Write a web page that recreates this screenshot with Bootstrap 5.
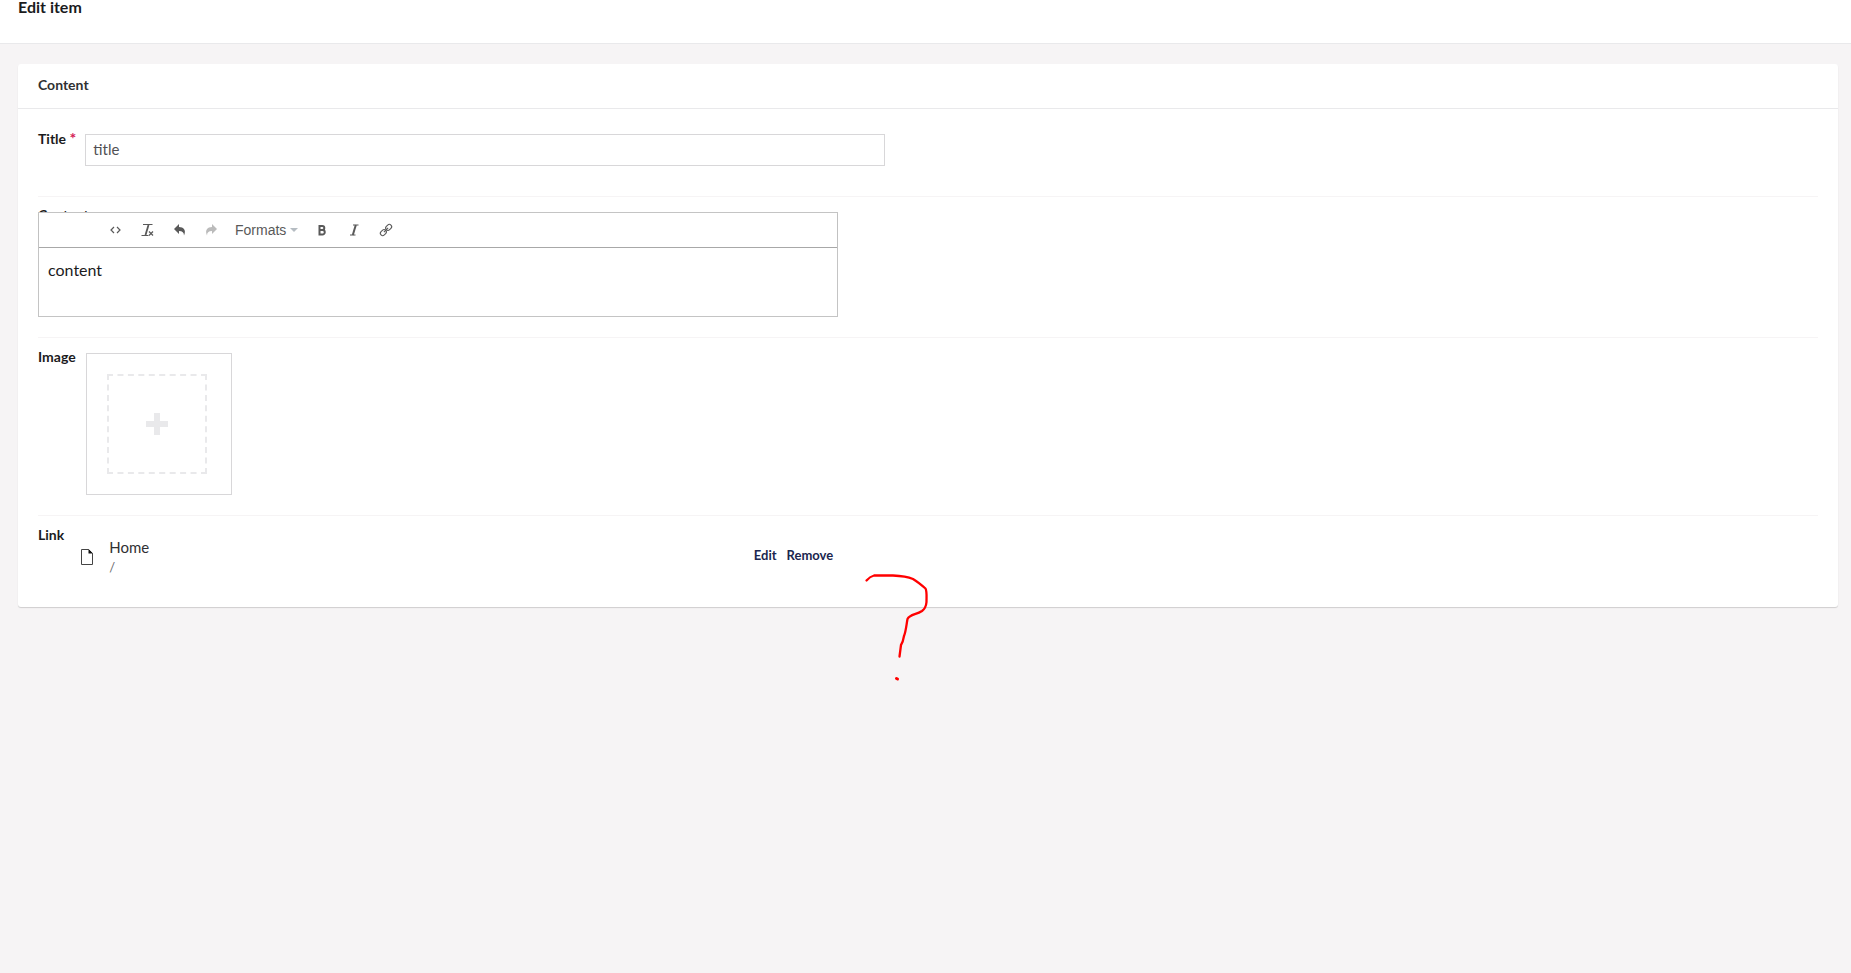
<!DOCTYPE html>
<html lang="en">
<head>
<meta charset="utf-8">
<meta name="viewport" content="width=device-width, initial-scale=1">
<title>Edit item</title>
<link href="https://cdn.jsdelivr.net/npm/bootstrap@5.3.0/dist/css/bootstrap.min.css" rel="stylesheet">
<style>
body { background: #f6f4f5; font-family: Lato, "Liberation Sans", sans-serif; font-size: 15px; line-height: 20px; color: #303033; }
.page-top { height: 44px; padding: 0 18px; border-bottom: 1px solid #e9e9eb; }
.page-top h1 { font-size: 16px; line-height: 14px; font-weight: 700; color: #1b1b1d; }
.page-main { padding: 20px 13px 20px 18px; }
.panel { border-radius: 3px; box-shadow: 0 1px 1px rgba(0,0,0,.16); }
.panel-head { height: 45px; padding: 0 20px 2px; border-bottom: 1px solid #e9e9eb; }
.panel-head h2 { font-size: 14px; line-height: 20px; font-weight: 700; }
.panel-content { padding: 10px 20px 0; }
.field { border-bottom: 1px solid #f6f4f5; padding: 15px 0; }
.field:last-child { border-bottom: 0; }
.field-name { font-size: 14px; line-height: 20px; font-weight: 700; margin-top: -6px; height: 20px; color: #1b1b1d; }
.required { font-size: 16px; color: #d42054; }
.field-short { min-height: 78px; gap: 9px; }
.title-input { width: 800px; height: 32px; padding: 0 7px 3px; border: 1px solid #d8d7d9; border-radius: 0; color: #515054; }
.field-editor { height: 141px; }
.under-editor { left: 0; top: 14px; }
.editor { width: 800px; height: 105px; border: 1px solid #c4c4c4; background: #fff; }
.editor-bar { height: 35px; padding-left: 60px; border-bottom: 1px solid #a8a8a8; box-shadow: 0 1px 1px rgba(0,0,0,.08); }
.tool { width: 32px; height: 28px; border: 0; background: none; padding: 0; color: #595959; }
.tool svg { display: block; margin: 0 auto; }
.tool:disabled { color: #bbb; }
.formats { width: 79px; height: 28px; border: 0; background: none; padding: 0 0 0 8px; font: 14px/20px "Liberation Sans", sans-serif; color: #595959; gap: 4px; }
.editor-text { padding: 12px 9px; font-size: 16px; line-height: 20px; color: #1b1b1d; resize: none; }
.field-image { height: 178px; gap: 10px; }
.media-box { width: 146px; height: 142px; padding: 20px; border: 1px solid #d8d7d9; }
.media-add { width: 100px; height: 100px; border: 2px dashed #e9e9eb; background: none; padding: 0; }
.field-link { min-height: 91px; gap: 16px; }
.link-row { width: 753px; padding-top: 6px; gap: 15px; }
.link-icon { margin-top: 11px; }
.link-url { font-size: 13px; color: #68676b; }
.link-actions { margin-top: 8px; gap: 10px; }
.link-action { font-size: 13px; font-weight: 700; color: #1b264f; }
.pen-mark { left: 840px; top: 506px; pointer-events: none; }
</style>
</head>
<body class="min-vh-100">
<header class="page-top bg-white">
  <h1 class="m-0">Edit item</h1>
</header>
<main class="page-main">
  <section class="panel bg-white position-relative">
    <div class="panel-head d-flex align-items-center"><h2 class="m-0">Content</h2></div>
    <form class="panel-content">
      <div class="field field-short d-flex">
        <label class="field-name" for="title">Title <span class="required">*</span></label>
        <input class="title-input" id="title" type="text" value="title">
      </div>
      <div class="field field-editor position-relative">
        <label class="field-name position-absolute under-editor" for="content">Content</label>
        <div class="editor position-relative">
          <div class="editor-bar d-flex align-items-center">
            <button class="tool" type="button" aria-label="Source code"><svg width="16" height="16" viewBox="0 0 16 16" fill="none" stroke="currentColor" stroke-width="1.2"><path d="M7 5 4 8l3 3M10 5l3 3-3 3"/></svg></button>
            <button class="tool" type="button" aria-label="Clear formatting"><svg width="16" height="16" viewBox="0 0 16 16" fill="none" stroke="currentColor"><path stroke-width="1.2" d="M4 2.500h9.500M2.500 13.500h7"/><path stroke-width="1.800" d="M9.500 3 6.500 13"/><path stroke-width="1.200" d="m10 9.500 4 4m0-4-4 4"/></svg></button>
            <button class="tool" type="button" aria-label="Undo"><svg width="16" height="16" viewBox="0 0 16 16" fill="currentColor"><path d="M8 2v3c4.500 0 7.500 3 5 8.500 0-3-1.500-4.500-5-4.500v3L3 7Z"/></svg></button>
            <button class="tool" type="button" aria-label="Redo" disabled><svg width="16" height="16" viewBox="0 0 16 16" fill="currentColor"><path d="M9 2v3c-4.500 0-7.500 3-5 8.500 0-3 1.500-4.500 5-4.500v3l5-5Z"/></svg></button>
            <button class="formats d-flex align-items-center" type="button">Formats <svg width="8" height="4" viewBox="0 0 8 4"><path fill="#b5bcc2" d="M0 0h8L4 4Z"/></svg></button>
            <button class="tool" type="button" aria-label="Bold"><svg width="16" height="16" viewBox="0 0 16 16" fill="none" stroke="currentColor" stroke-width="2"><path d="M5.500 4v8.500h3a2.200 2.200 0 0 0 0-4.500h-3 2.800a2 2 0 0 0 0-4Z"/></svg></button>
            <button class="tool" type="button" aria-label="Italic"><svg width="16" height="16" viewBox="0 0 16 16" fill="none" stroke="currentColor"><path d="M7 3h5.500M4 13h5.500"/><path stroke-width="2" d="M9.800 3 6.800 13"/></svg></button>
            <button class="tool" type="button" aria-label="Insert link"><svg width="16" height="16" viewBox="0 0 16 16" fill="none" stroke="currentColor" stroke-width="1.1"><g transform="rotate(-45 8 8)"><rect x="1" y="5.700" width="6.500" height="4.600" rx="2.300"/><rect x="8.500" y="5.700" width="6.500" height="4.600" rx="2.300"/><path d="M5 8h6"/></g></svg></button>
          </div>
          <textarea class="editor-text d-block w-100 border-0" id="content" rows="2">content</textarea>
        </div>
      </div>
      <div class="field field-image d-flex">
        <label class="field-name" for="add-image">Image</label>
        <div class="media-box">
          <button class="media-add d-flex align-items-center justify-content-center" id="add-image" type="button" aria-label="Add image"><svg width="22" height="22" viewBox="0 0 22 22" fill="#e9e9eb"><path d="M8 0h6v8h8v6h-8v8H8v-8H0V8h8Z"/></svg></button>
        </div>
      </div>
      <div class="field field-link d-flex">
        <span class="field-name">Link</span>
        <div class="link-row d-flex align-items-start">
          <svg class="link-icon" width="14" height="18" viewBox="0 0 14 18"><path fill="#fff" stroke="#444" d="M1.500 1.500h7l4 4v11h-11Z"/><path fill="#111" d="M8.500 1v4.500H13Z"/></svg>
          <div>
            <div>Home</div>
            <div class="link-url">/</div>
          </div>
          <div class="link-actions d-flex ms-auto">
            <a class="link-action text-decoration-none" href="#">Edit</a>
            <a class="link-action text-decoration-none" href="#">Remove</a>
          </div>
        </div>
      </div>
    </form>
    <svg class="pen-mark position-absolute" width="80" height="115" viewBox="858 570 80 115" fill="none" stroke="#f00" stroke-width="2.300" stroke-linecap="round" stroke-linejoin="round" aria-hidden="true"><path d="M866.500 580.500Q870 576.500 874 575.500H893Q906 576 913 579Q918 582 925.500 588.500C927 591 926.500 596 926.500 602Q926 608 922 611C916 615 910 614 907.500 619C906.500 624 906 631 904 636Q903 642 901 645L899.500 656.500"/><path stroke-width="3" d="m896.500 678.500 1 .5"/></svg>
  </section>
</main>
<script src="https://cdn.jsdelivr.net/npm/bootstrap@5.3.0/dist/js/bootstrap.bundle.min.js"></script>
</body>
</html>
